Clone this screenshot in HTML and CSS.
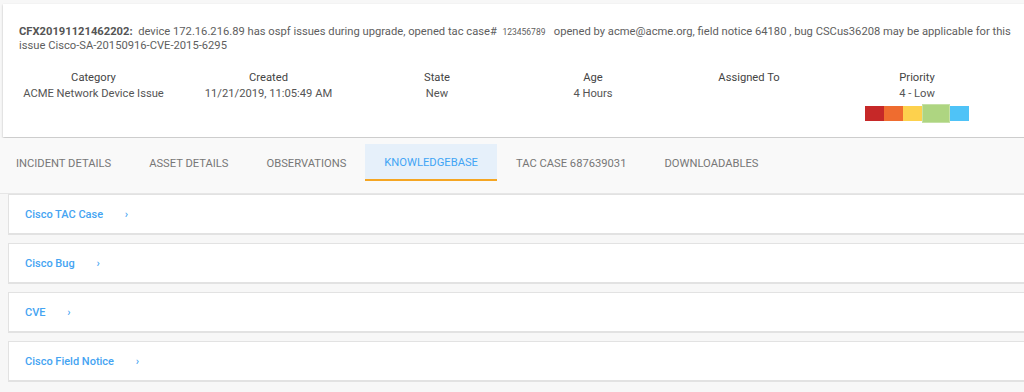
FILE: index.html
```html
<!DOCTYPE html>
<html lang="en">
<head>
  <meta charset="UTF-8">
  <title>CFX20191121462202</title>
  <link rel="stylesheet" href="styles.css">
</head>
<body>

<div class="incident">
  <p class="summary">
    <b>CFX20191121462202:</b>&nbsp; <span>device 172.16.216.89 has ospf issues during upgrade, opened tac case#</span> &nbsp;<small>123456789</small>&nbsp;&nbsp; <span>opened by acme@acme.org, field notice 64180 , bug CSCus36208 may be applicable for this</span><br><span>issue Cisco-SA-20150916-CVE-2015-6295</span>
  </p>
  <div class="fields">
    <div class="field"><div class="label">Category</div><div class="value">ACME Network Device Issue</div></div>
    <div class="field"><div class="label">Created</div><div class="value">11/21/2019, 11:05:49 AM</div></div>
    <div class="field"><div class="label">State</div><div class="value">New</div></div>
    <div class="field"><div class="label">Age</div><div class="value">4 Hours</div></div>
    <div class="field"><div class="label">Assigned To</div><div class="value"></div></div>
    <div class="field">
      <div class="label">Priority</div><div class="value">4 - Low</div>
      <div class="priority">
        <span class="p1"></span><span class="p2"></span><span class="p3"></span><span class="p4 active"></span><span class="p5"></span>
      </div>
    </div>
  </div>
</div>

<div class="tabs">
  <div class="tab">INCIDENT DETAILS</div>
  <div class="tab">ASSET DETAILS</div>
  <div class="tab">OBSERVATIONS</div>
  <div class="tab active">KNOWLEDGEBASE</div>
  <div class="tab">TAC CASE 687639031</div>
  <div class="tab">DOWNLOADABLES</div>
</div>

<div class="kb-list">
  <div class="kb-item">Cisco TAC Case <span class="chev">&rsaquo;</span></div>
  <div class="kb-item">Cisco Bug <span class="chev">&rsaquo;</span></div>
  <div class="kb-item">CVE <span class="chev">&rsaquo;</span></div>
  <div class="kb-item">Cisco Field Notice <span class="chev">&rsaquo;</span></div>
</div>

</body>
</html>
```

FILE: styles.css
```css
* { box-sizing: border-box; margin: 0; padding: 0; }
html, body { overflow: hidden; }
body {
  font-family: Roboto, "Liberation Sans", sans-serif;
  background: #f7f7f7;
  color: #555;
  font-size: 11.2px;
}

.incident {
  background: #fff;
  margin: 4px -20px 0 3px;
  padding: 21px 16px 14px 16px;
  box-shadow: 0 1px 2px rgba(0,0,0,0.25);
}
.summary {
  line-height: 14px;
  color: #5e5e5e;
  white-space: nowrap;
}
.summary b { font-weight: 700; color: #555; }
.summary small { font-size: 8.5px; }

.fields {
  display: grid;
  grid-template-columns: 175px 175px 162px 150px 162px 174px;
  margin: 17px 0 0 -13px;
  text-align: center;
}
.field .label, .field .value { line-height: 16px; height: 16px; }
.field .label { color: #444; }
.field .value { color: #555; }
.priority {
  display: flex;
  justify-content: center;
  align-items: center;
  margin-top: 2px;
}
.priority span {
  width: 19px;
  height: 15px;
}
.priority .p1 { background: #c62828; }
.priority .p2 { background: #ef6c2f; }
.priority .p3 { background: #fdd14d; }
.priority .p4 { background: #aed581; }
.priority .p5 { background: #4fc3f7; }
.priority .active {
  width: 28px;
  height: 19px;
  border: 1px solid #c5e1a5;
}

.tabs {
  display: flex;
  background: #f9f9f9;
  margin-top: 1px;
  padding: 6px 0 12px 0;
  border-bottom: 1px solid #e6e6e6;
}
.tab {
  height: 37px;
  line-height: 39px;
  padding: 0 19px;
  color: #777;
  font-size: 11.2px;
}
.tab:first-child { margin-left: -3px; }
.tab.active {
  background: #e6f0fa;
  color: #42a5f5;
  border-bottom: 2px solid #f5a623;
  line-height: 37px;
}

.kb-list {
  display: flex;
  flex-direction: column;
  gap: 8px;
  margin: 0 -20px 0 8px;
}
.kb-item {
  height: 41px;
  line-height: 39px;
  background: #fff;
  border: 1px solid #e2e2e2;
  border-bottom-width: 2px;
  padding-left: 16px;
  color: #45a4f2;
  font-weight: 500;
  font-size: 11px;
}
.chev {
  font-size: 11px;
  margin-left: 19px;
}
```
